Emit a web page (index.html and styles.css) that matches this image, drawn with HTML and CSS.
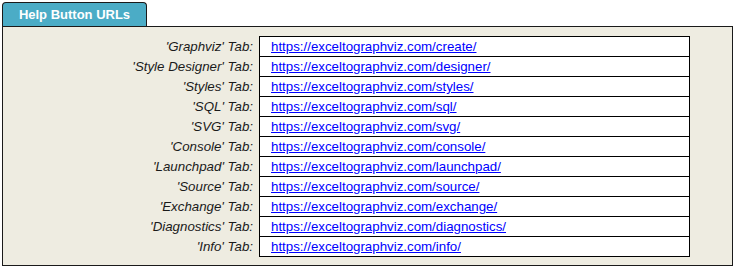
FILE: index.html
```html
<!DOCTYPE html>
<html lang="en">
<head>
  <meta charset="utf-8" />
  <title>Help Button URLs</title>
  <link rel="stylesheet" href="styles.css">
</head>
<body>
  <div class="sheet">
    <div class="tab">Help Button URLs</div>
    <div class="panel">
      <div class="labels">
        <div class="label">'Graphviz' Tab:</div>
        <div class="label">'Style Designer' Tab:</div>
        <div class="label">'Styles' Tab:</div>
        <div class="label">'SQL' Tab:</div>
        <div class="label">'SVG' Tab:</div>
        <div class="label">'Console' Tab:</div>
        <div class="label">'Launchpad' Tab:</div>
        <div class="label">'Source' Tab:</div>
        <div class="label">'Exchange' Tab:</div>
        <div class="label">'Diagnostics' Tab:</div>
        <div class="label">'Info' Tab:</div>
      </div>
      <div class="urls">
        <div class="cell"><a href="#">https://exceltographviz.com/create/</a></div>
        <div class="cell"><a href="#">https://exceltographviz.com/designer/</a></div>
        <div class="cell"><a href="#">https://exceltographviz.com/styles/</a></div>
        <div class="cell"><a href="#">https://exceltographviz.com/sql/</a></div>
        <div class="cell"><a href="#">https://exceltographviz.com/svg/</a></div>
        <div class="cell"><a href="#">https://exceltographviz.com/console/</a></div>
        <div class="cell"><a href="#">https://exceltographviz.com/launchpad/</a></div>
        <div class="cell"><a href="#">https://exceltographviz.com/source/</a></div>
        <div class="cell"><a href="#">https://exceltographviz.com/exchange/</a></div>
        <div class="cell"><a href="#">https://exceltographviz.com/diagnostics/</a></div>
        <div class="cell"><a href="#">https://exceltographviz.com/info/</a></div>
      </div>
    </div>
  </div>
</body>
</html>
```

FILE: styles.css
```css
body {
  margin: 0;
  padding: 2px 2px 0 2px;
  background: #fff;
  font-family: "Liberation Sans", Arial, sans-serif;
  font-size: 13.3px;
}
.sheet {
  width: 731px;
}
.tab {
  display: inline-block;
  width: 143px;
  height: 23px;
  line-height: 23px;
  background: #4bacc6;
  border: 1px solid #1a1a1a;
  border-bottom: none;
  border-radius: 4px 4px 0 0;
  color: #fff;
  font-size: 13px;
  font-weight: bold;
  text-align: center;
  vertical-align: bottom;
}
.panel {
  display: flex;
  background: #eeece1;
  border: 1px solid #1a1a1a;
  height: 240px;
  padding-top: 9px;
  box-sizing: border-box;
}
.labels {
  width: 256px;
  padding-top: 1px;
  box-sizing: border-box;
}
.label {
  height: 20px;
  line-height: 19px;
  padding-right: 6px;
  text-align: right;
  font-style: italic;
  color: #1a1a1a;
}
.urls {
  width: 429px;
  background: #fff;
  border: 1px solid #000;
  align-self: flex-start;
}
.cell {
  height: 19px;
  line-height: 19px;
  padding-left: 11px;
  border-top: 1px solid #000;
}
.cell:first-child {
  border-top: none;
}
a {
  color: #0000ff;
  text-decoration: underline;
}
```
